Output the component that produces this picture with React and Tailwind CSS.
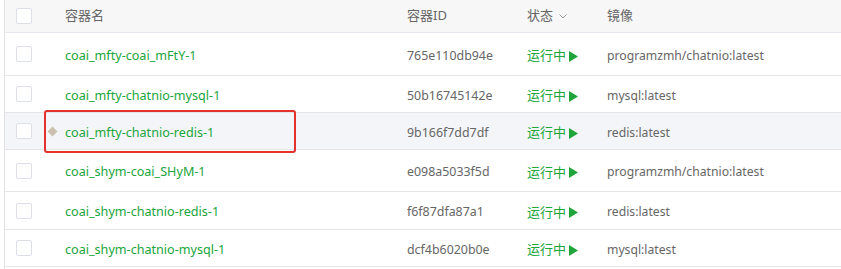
import React from "react";

const rows = [
  { name: "coai_mfty-coai_mFtY-1", id: "765e110db94e", image: "programzmh/chatnio:latest", h: "h-[43px]" },
  { name: "coai_mfty-chatnio-mysql-1", id: "50b16745142e", image: "mysql:latest", h: "h-[37px]" },
  { name: "coai_mfty-chatnio-redis-1", id: "9b166f7dd7df", image: "redis:latest", h: "h-[37px]", active: true },
  { name: "coai_shym-coai_SHyM-1", id: "e098a5033f5d", image: "programzmh/chatnio:latest", h: "h-[42px]" },
  { name: "coai_shym-chatnio-redis-1", id: "f6f87dfa87a1", image: "redis:latest", h: "h-[38px]" },
  { name: "coai_shym-chatnio-mysql-1", id: "dcf4b6020b0e", image: "mysql:latest", h: "h-[37px]" },
];

function Checkbox() {
  return <div className="w-4 h-4 border border-[#dcdfe6] rounded-[2px] bg-white" />;
}

export default function App() {
  return (
    <div
      className="w-[841px] h-[269px] bg-white overflow-hidden pl-[4px] text-[13px]"
      style={{ fontFamily: '"Noto Sans", "Noto Sans CJK SC", sans-serif' }}
    >
      <div className="border-l border-[#e2e2e2] h-full">
        <div className="flex items-center h-[33px] bg-[#f7f7f7] border-b border-[#e6e6ee] text-[#666]">
          <div className="w-[60px] pl-[11px] flex items-center"><Checkbox /></div>
          <div className="w-[342px]">容器名</div>
          <div className="w-[120px]">容器ID</div>
          <div className="w-[80px] flex items-center">
            状态
            <svg width="10" height="10" viewBox="0 0 10 10" className="ml-[5px]">
              <path d="M1.5 3.5 L5 7 L8.5 3.5" fill="none" stroke="#999" strokeWidth="1" />
            </svg>
          </div>
          <div>镜像</div>
        </div>
        {rows.map((r) => (
          <div
            key={r.id}
            className={`flex items-center ${r.h} border-b border-[#e6e6e6] ${r.active ? "bg-[#f3f5f8]" : ""} text-[#666]`}
          >
            <div className="w-[60px] pl-[11px] flex items-center"><Checkbox /></div>
            <div className="w-[342px] relative text-[#20a53a] pt-[4px] text-[12.6px]">
              {r.active && (
                <>
                  <div className="absolute left-[-21px] top-[-10px] w-[252px] h-[43px] border-2 border-[#e5312d] rounded-[3px]" />
                  <div className="absolute left-[-16px] top-[8px] w-[7px] h-[7px] bg-[#cbbfae] rotate-45" />
                </>
              )}
              {r.name}
            </div>
            <div className="w-[120px] pt-[4px] text-[12.4px]">{r.id}</div>
            <div className="w-[80px] pt-[4px] flex items-center text-[#20a53a]">
              运行中
              <svg width="9" height="11" viewBox="0 0 9 11" className="ml-[3px]">
                <path d="M0 0 L9 5.5 L0 11 Z" fill="#20a53a" />
              </svg>
            </div>
            <div className="pt-[4px] text-[12.2px]">{r.image}</div>
          </div>
        ))}
      </div>
    </div>
  );
}
